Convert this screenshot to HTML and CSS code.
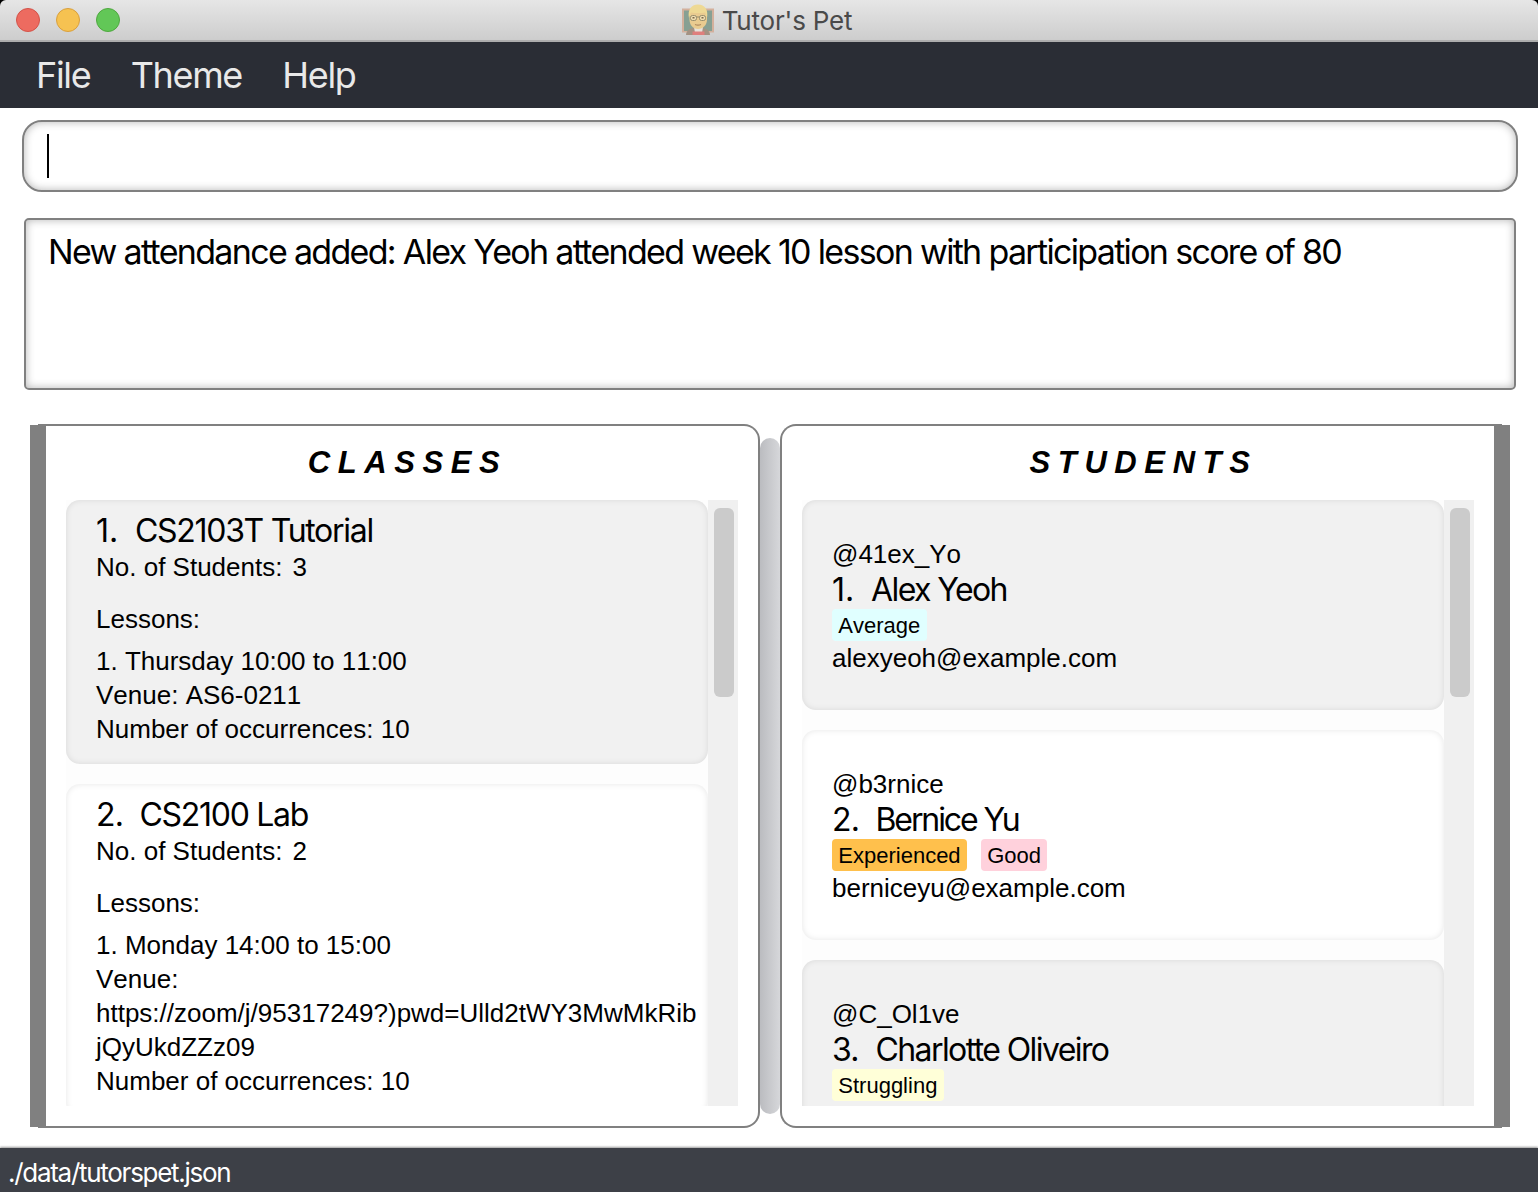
FILE: index.html
```html
<!DOCTYPE html>
<html lang="en">
<head>
<meta charset="utf-8">
<title>Tutor's Pet</title>
<link rel="stylesheet" href="styles.css">
</head>
<body>
<div class="window">
  <header class="titlebar">
    <div class="lights"><span class="light close"></span><span class="light minimise"></span><span class="light zoom"></span></div>
    <div class="app-title">
      <svg class="app-icon" width="34" height="32" viewBox="0 0 34 32">
        <rect x="1" y="4.500" width="32" height="24" fill="#d3b09c"/>
        <rect x="3" y="6.500" width="28" height="20.500" fill="#87a093"/>
        <path d="M5 31c0-4.500 4-7.500 12-7.500s12 3 12 7.500z" fill="#a39283"/>
        <path d="M13 23h9l-1 6h-7z" fill="#e6e2dc"/>
        <rect x="11.500" y="27.500" width="12" height="3.500" fill="#df7f7d"/>
        <path d="M8.500 11c0-6 3.500-9 8.500-9s9 3 9 9v4.500c0 5.500-4 9.500-9 9.500s-8.500-4-8.500-9.500z" fill="#e9cb90"/>
        <path d="M8 14c-1.500-8 2-13.500 9-13.500S27.500 6 26 14l-1.800-5.500c-4.500.8-9.500.8-14.400 0z" fill="#eed994"/>
        <g fill="#eeddb0" stroke="#8d8467" stroke-width=".9"><rect x="9.500" y="11.500" width="6" height="5" rx="2"/><rect x="18.500" y="11.500" width="6" height="5" rx="2"/><path d="M15.500 13h3"/></g>
        <path d="M11.500 13.800h2M20.500 13.800h2" stroke="#7d6a4c" stroke-width="1.400"/>
        <path d="M14 20.500q3 1.200 6 0" fill="none" stroke="#b08a5e" stroke-width="1.200"/>
      </svg>
      <span class="app-name">Tutor's Pet</span>
    </div>
  </header>
  <nav class="menu"><span>File</span><span>Theme</span><span>Help</span></nav>
  <main class="content">
    <div class="command"><span class="caret"></span></div>
    <div class="result"><span class="message">New attendance added: Alex Yeoh attended week 10 lesson with participation score of 80</span></div>
    <div class="panels">
      <section class="panel classes">
        <h2>CLASSES</h2>
        <div class="list">
          <div class="cards">
            <article class="card shaded class-card">
              <div class="name"><span class="num">1.</span><span>CS2103T Tutorial</span></div>
              <p>No. of Students:<span class="count">3</span></p>
              <p class="lessons">Lessons:</p>
              <p>1. Thursday 10:00 to 11:00</p>
              <p>Venue: AS6-0211</p>
              <p>Number of occurrences: 10</p>
            </article>
            <article class="card class-card">
              <div class="name"><span class="num wide">2.</span><span>CS2100 Lab</span></div>
              <p>No. of Students:<span class="count">2</span></p>
              <p class="lessons">Lessons:</p>
              <p>1. Monday 14:00 to 15:00</p>
              <p>Venue:<br>https://zoom/j/95317249?)pwd=Ulld2tWY3MwMkRib<br>jQyUkdZZz09</p>
              <p>Number of occurrences: 10</p>
            </article>
          </div>
          <div class="scroll"><div class="thumb"></div></div>
        </div>
      </section>
      <div class="splitter"></div>
      <section class="panel students">
        <h2>STUDENTS</h2>
        <div class="list">
          <div class="cards">
            <article class="card shaded student-card">
              <p>@41ex_Yo</p>
              <div class="name"><span class="num">1.</span><span>Alex Yeoh</span></div>
              <div class="tags"><span class="tag average">Average</span></div>
              <p>alexyeoh@example.com</p>
            </article>
            <article class="card student-card">
              <p>@b3rnice</p>
              <div class="name tight"><span class="num wide">2.</span><span>Bernice Yu</span></div>
              <div class="tags"><span class="tag experienced">Experienced</span><span class="tag good">Good</span></div>
              <p>berniceyu@example.com</p>
            </article>
            <article class="card shaded student-card">
              <p>@C_Ol1ve</p>
              <div class="name"><span class="num wide">3.</span><span>Charlotte Oliveiro</span></div>
              <div class="tags"><span class="tag struggling">Struggling</span></div>
            </article>
          </div>
          <div class="scroll"><div class="thumb"></div></div>
        </div>
      </section>
    </div>
  </main>
  <footer class="status">./data/tutorspet.json</footer>
</div>
</body>
</html>
```
FILE: styles.css
```css
* { box-sizing: border-box; }
body { margin: 0; background: #000; color: #000; font-family: "Liberation Sans", Arial, sans-serif; font-kerning: none; }
p, h2 { margin: 0; }
.window { width: 1538px; height: 1192px; display: flex; flex-direction: column; overflow: hidden; }

.titlebar { height: 42px; flex: none; display: grid; grid-template-columns: 1fr auto 1fr; align-items: center; background: linear-gradient(#e6e6e6, #cdcdcd); border-bottom: 2px solid #adadad; border-radius: 6px 6px 0 0; }
.lights { display: flex; gap: 16px; padding-left: 16px; }
.light { width: 24px; height: 24px; border-radius: 50%; border: 1px solid #d35349; background: #ed6b60; }
.minimise { background: #f6c251; border-color: #d9a03e; }
.zoom { background: #62c757; border-color: #4fa83f; }
.app-title { display: flex; align-items: center; gap: 7px; padding-right: 5px; }
.app-icon { display: block; }
.app-name { font: 26px/34px Inter, sans-serif; letter-spacing: -.2px; color: #4a4a4a; padding-top: 2px; }

.menu { height: 66px; flex: none; display: flex; gap: 40.4px; padding: 0 36px; background: #2a2d35; color: #e9e9e9; font: 36px/66px Inter, sans-serif; letter-spacing: -1.35px; font-kerning: normal; }

.content { flex: 1; padding: 12px 20px 20px 22px; background: #fff; }
.command { height: 72px; width: 1496px; border: 2px solid #808080; border-radius: 20px; padding: 12px 23px; box-shadow: inset 0 0 8px rgba(0,0,0,.3); }
.caret { display: block; width: 2px; height: 44px; background: #000; }
.result { width: 1492px; height: 172px; margin: 26px 2px 34px; padding: 10px 22px; border: 2px solid #808080; border-radius: 5px; box-shadow: inset 0 0 8px rgba(0,0,0,.3); }
.message { font: 34px/44px Inter, sans-serif; letter-spacing: -1.68px; font-kerning: normal; white-space: nowrap; }

.panels { display: flex; padding: 0 8px; height: 704px; }
.panel { position: relative; width: 722px; height: 704px; border: 2px solid #808080; }
.panel::before { content: ""; position: absolute; top: -1px; bottom: -1px; width: 16px; background: #808080; }
.classes { margin-left: 8px; border-left: 0; border-radius: 0 16px 16px 0; padding-left: 28px; }
.classes::before { left: -8px; }
.students { margin-right: 8px; border-right: 0; border-radius: 16px 0 0 16px; padding-left: 20px; }
.students::before { right: -8px; }
.panel h2 { width: 676px; height: 74px; padding-left: 7px; text-align: center; font: italic bold 31px/74px "Liberation Sans", Arial, sans-serif; letter-spacing: 7.6px; }
.splitter { width: 20px; height: 676px; margin-top: 14px; border-radius: 10px; background: linear-gradient(90deg, #bbbcc0, #d6d7da); }
.list { width: 672px; height: 606px; display: flex; background: #fdfdfd; overflow: hidden; }
.cards { width: 642px; display: flex; flex-direction: column; gap: 20px; }
.card { flex: none; border-radius: 14px; background: #fff; padding-left: 30px; box-shadow: inset 0 0 6px rgba(0,0,0,.1); font-size: 26px; line-height: 34px; white-space: nowrap; }
.shaded { background: #f1f1f1; }
.class-card { padding-top: 12px; padding-bottom: 18px; }
.student-card { min-height: 210px; padding-top: 37px; padding-bottom: 35px; }
.name { display: flex; font: 32px/38px Inter, sans-serif; font-kerning: normal; letter-spacing: -1.3px; }
.students .name { letter-spacing: -1.6px; }
.students .tight { letter-spacing: -2.1px; }
.name .num { width: 39px; letter-spacing: 0; }
.name .wide { width: 43.500px; letter-spacing: -.7px; }
.count { margin-left: 10px; }
.lessons { margin: 18px 0 8px; }
.tags { display: flex; gap: 14px; height: 32px; }
.tag { padding: 0 6.300px; border-radius: 4px; font-size: 22px; line-height: 34px; }
.average { background: #e0ffff; }
.experienced { background: #ffc04c; }
.good { background: #ffd1dc; }
.struggling { background: #ffffd8; }
.scroll { width: 30px; background: #f0f0f0; padding: 8px 6px; }
.thumb { width: 20px; height: 189px; border-radius: 6px; background: #cbcbcb; }

.status { height: 44px; flex: none; padding-left: 8px; background: #3d4047; color: #fff; font: 26px/50px Inter, sans-serif; letter-spacing: -1.28px; font-kerning: normal; box-shadow: 0 -1px 2px rgba(0,0,0,.4); }
```
